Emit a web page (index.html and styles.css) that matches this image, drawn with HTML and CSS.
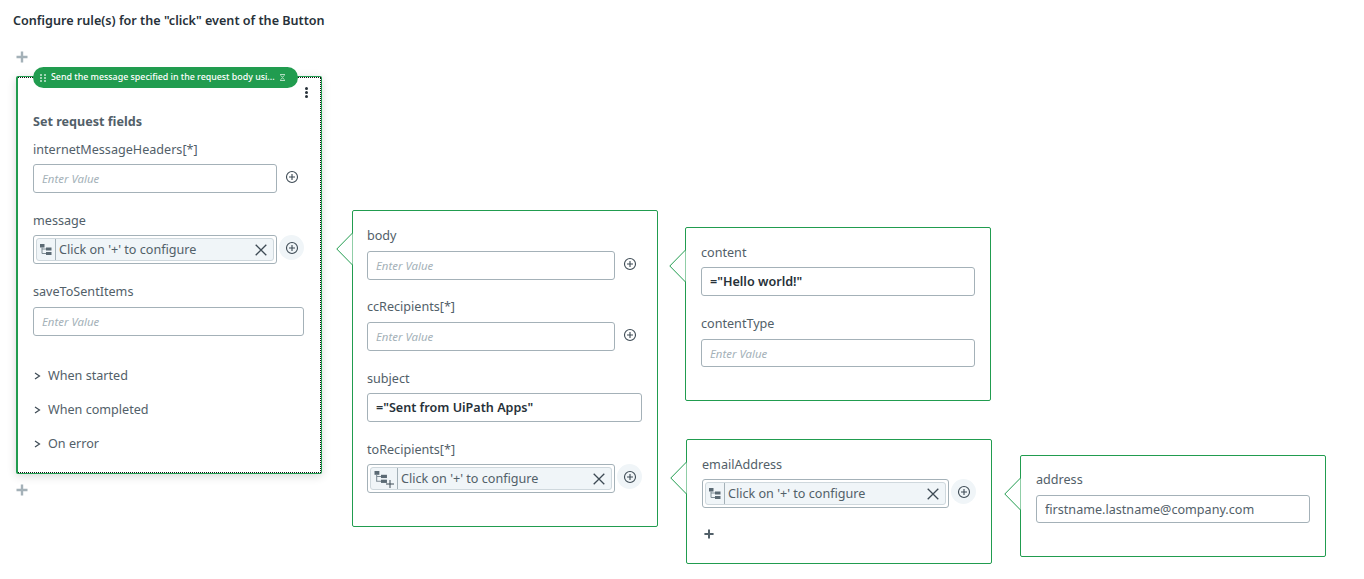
FILE: index.html
```html
<!DOCTYPE html>
<html lang="en">
<head>
<meta charset="utf-8">
<title>Configure rules</title>
<link rel="stylesheet" href="styles.css">
</head>
<body>
<svg class="defs" width="0" height="0" aria-hidden="true">
  <symbol id="tree" viewBox="0 0 12 12">
    <rect x="0" y="0" width="4.5" height="3.5" fill="#5b6a74"/>
    <rect x="6" y="3.5" width="5.5" height="3" fill="#5b6a74"/>
    <rect x="6" y="8" width="5.5" height="3" fill="#5b6a74"/>
    <path d="M2 3.5V9.5H6M2 5H6" fill="none" stroke="#7d8b94" stroke-width="1"/>
  </symbol>
  <symbol id="add" viewBox="0 0 14 14">
    <circle cx="7" cy="7" r="5.5" fill="none" stroke="#3d4a54" stroke-width="1.1"/>
    <path d="M7 4V10M4 7H10" fill="none" stroke="#3d4a54" stroke-width="1.1"/>
  </symbol>
  <symbol id="close" viewBox="0 0 12 12">
    <path d="M.7.7 11.3 11.3M11.3.7.7 11.3" fill="none" stroke="#3d4a54" stroke-width="1.3"/>
  </symbol>
  <symbol id="plus" viewBox="0 0 12 12">
    <path d="M6 .5V11.5M.5 6H11.5" fill="none" stroke="currentColor" stroke-width="2.4"/>
  </symbol>
  <symbol id="chev" viewBox="0 0 7 8">
    <path d="M1 1 5.5 4 1 7" fill="none" stroke="#3d4a54" stroke-width="1.2"/>
  </symbol>
  <symbol id="notch" viewBox="0 0 17 34">
    <path d="M16.5 0 .8 16 16.5 32" fill="#fff" stroke="#219c4f" stroke-width="1"/>
  </symbol>
</svg>

<main class="canvas">
  <section class="rules">
    <h1 class="title">Configure rule(s) for the "click" event of the Button</h1>
    <svg class="insert insert-top"><use href="#plus"/></svg>

    <article class="card">
      <div class="pill">
        <svg class="grip" viewBox="0 0 6 8"><path d="M0 0h2v2H0zM4 0h2v2H4zM0 3h2v2H0zM4 3h2v2H4zM0 6h2v2H0zM4 6h2v2H4z" fill="#9fd5b3"/></svg>
        <span class="pill-text">Send the message specified in the request body usi...</span>
        <svg class="collapse" viewBox="0 0 7 7"><path d="M1 .5H6M1.5 1.5 3.5 3 5.5 1.5M1.5 5.5 3.5 4 5.5 5.5M1 6.5H6" fill="none" stroke="#d8f0e0" stroke-width=".8"/></svg>
      </div>
      <div class="kebab"><i></i><i></i><i></i></div>
      <h2 class="section-title">Set request fields</h2>

      <div class="field">
        <label class="label">internetMessageHeaders[*]</label>
        <div class="row">
          <input class="input" placeholder="Enter Value">
          <span class="add"><svg><use href="#add"/></svg></span>
        </div>
      </div>
      <div class="field">
        <label class="label">message</label>
        <div class="row">
          <div class="input chipbox">
            <div class="chip">
              <span class="chip-icon"><svg><use href="#tree"/></svg></span>
              <span class="chip-text">Click on '+' to configure</span>
              <svg class="chip-close"><use href="#close"/></svg>
            </div>
          </div>
          <span class="add add-active"><svg><use href="#add"/></svg></span>
        </div>
      </div>
      <div class="field field-last">
        <label class="label">saveToSentItems</label>
        <div class="row">
          <input class="input" placeholder="Enter Value">
        </div>
      </div>

      <ul class="events">
        <li><svg class="chev"><use href="#chev"/></svg>When started</li>
        <li><svg class="chev"><use href="#chev"/></svg>When completed</li>
        <li><svg class="chev"><use href="#chev"/></svg>On error</li>
      </ul>
    </article>

    <svg class="insert insert-bottom"><use href="#plus"/></svg>
  </section>

  <section class="panel panel-message">
    <svg class="notch"><use href="#notch"/></svg>
    <div class="field">
      <label class="label">body</label>
      <div class="row">
        <input class="input" placeholder="Enter Value">
        <span class="add"><svg><use href="#add"/></svg></span>
      </div>
    </div>
    <div class="field">
      <label class="label">ccRecipients[*]</label>
      <div class="row">
        <input class="input" placeholder="Enter Value">
        <span class="add"><svg><use href="#add"/></svg></span>
      </div>
    </div>
    <div class="field">
      <label class="label">subject</label>
      <div class="row">
        <input class="input input-strong" value='="Sent from UiPath Apps"'>
      </div>
    </div>
    <div class="field">
      <label class="label">toRecipients[*]</label>
      <div class="row">
        <div class="input chipbox">
          <div class="chip">
            <span class="chip-icon chip-icon-wide">
              <svg class="tree-wide"><use href="#tree"/></svg>
              <svg class="tree-plus" viewBox="0 0 8 8"><path d="M4 0V8M0 4H8" fill="none" stroke="#3d4a54" stroke-width="1"/></svg>
            </span>
            <span class="chip-text">Click on '+' to configure</span>
            <svg class="chip-close"><use href="#close"/></svg>
          </div>
        </div>
        <span class="add add-active"><svg><use href="#add"/></svg></span>
      </div>
    </div>
  </section>

  <div class="stack">
    <section class="panel panel-body">
      <svg class="notch"><use href="#notch"/></svg>
      <div class="field">
        <label class="label">content</label>
        <div class="row">
          <input class="input input-strong" value='="Hello world!"'>
        </div>
      </div>
      <div class="field">
        <label class="label">contentType</label>
        <div class="row">
          <input class="input" placeholder="Enter Value">
        </div>
      </div>
    </section>

    <section class="panel panel-recipient">
      <svg class="notch"><use href="#notch"/></svg>
      <div class="field field-tight">
        <label class="label">emailAddress</label>
        <div class="row">
          <div class="input chipbox">
            <div class="chip">
              <span class="chip-icon"><svg><use href="#tree"/></svg></span>
              <span class="chip-text">Click on '+' to configure</span>
              <svg class="chip-close"><use href="#close"/></svg>
            </div>
          </div>
          <span class="add add-active"><svg><use href="#add"/></svg></span>
        </div>
      </div>
      <svg class="insert insert-dark"><use href="#plus"/></svg>
    </section>
  </div>

  <section class="panel panel-address">
    <svg class="notch"><use href="#notch"/></svg>
    <div class="field">
      <label class="label">address</label>
      <div class="row">
        <input class="input" value="firstname.lastname@company.com">
      </div>
    </div>
  </section>
</main>
</body>
</html>
```

FILE: styles.css
```css
* { box-sizing: border-box; }

html, body {
  margin: 0;
  background: #fff;
}

body {
  font-family: "Noto Sans", "Open Sans", sans-serif;
  font-size: 12.6px;
  line-height: 20px;
  color: #526069;
  overflow: hidden;
}

.defs { position: absolute; }

.canvas {
  display: flex;
  align-items: flex-start;
  height: 579px;
}

.rules {
  flex: 0 0 352px;
  padding: 11px 0 0 16px;
}

.title {
  margin: 0 0 0 -3px;
  font-size: 12.6px;
  font-weight: 600;
  line-height: 20px;
  color: #273139;
}

.insert {
  display: block;
  width: 12px;
  height: 12px;
  color: #a4b1b8;
}

.insert-top { margin: 20px 0 13px 0; }
.insert-bottom { margin-top: 10px; }
.insert-dark { margin: 21px 0 0 2px; width: 10px; height: 10px; color: #526069; }

.card {
  position: relative;
  width: 306px;
  height: 398px;
  padding: 35px 17px 0 15px;
  background: #fff;
  border: 1px solid #219c4f;
  border-left-width: 2px;
  border-radius: 2px;
  box-shadow: 0 2px 10px rgba(0, 0, 0, .16);
}

.card::after {
  content: "";
  position: absolute;
  inset: 0 0 0 0;
  border: 1px dotted #111;
  border-left: 0;
  pointer-events: none;
}

.pill {
  position: absolute;
  z-index: 1;
  top: -10px;
  left: 15px;
  display: flex;
  align-items: center;
  width: 265px;
  height: 21px;
  padding: 0 12px 0 7px;
  border-radius: 11px;
  background: #219c4f;
  color: #fff;
  font-size: 8.85px;
  font-weight: 500;
  line-height: 21px;
}

.grip { width: 6px; height: 8px; margin-right: 5px; flex: none; }
.pill-text { flex: 1; white-space: nowrap; }
.collapse { width: 7px; height: 7px; flex: none; }

.kebab {
  position: absolute;
  top: 10px;
  right: 13px;
  display: flex;
  flex-direction: column;
  gap: 1px;
}

.kebab i {
  display: block;
  width: 3px;
  height: 3px;
  border-radius: 50%;
  background: #273139;
}

.section-title {
  margin: 0 0 7px;
  font-size: 12.6px;
  font-weight: 700;
  line-height: 20px;
  color: #526069;
}

.field { margin-bottom: 17px; }
.field-last { margin-bottom: 30px; }
.field-tight { margin-bottom: 0; }

.label {
  display: block;
  padding-top: 1px;
  margin-bottom: 4px;
  line-height: 20px;
}

.field-last .label { margin-bottom: 5px; }

.panel-message .field:nth-child(-n+3) .label {
  padding-top: 0;
  margin-bottom: 5px;
}

.row {
  display: flex;
  align-items: flex-start;
}

.input {
  display: block;
  width: 100%;
  height: 29px;
  padding: 0 8px;
  border: 1px solid #a4b1b8;
  border-radius: 3px;
  background: #fff;
  font: inherit;
  color: #526069;
  outline: 0;
}

.input::placeholder {
  font-size: 11.4px;
  font-style: italic;
  color: #a4b1b8;
  opacity: 1;
}

.input-strong {
  font-weight: 600;
  color: #273139;
}

.chipbox { padding: 2px; }

.chip {
  display: flex;
  align-items: center;
  height: 23px;
  border: 1px solid #cfd8dd;
  border-radius: 3px;
  background: #f0f5f8;
}

.chip-icon {
  position: relative;
  display: flex;
  align-items: center;
  justify-content: center;
  flex: none;
  width: 19px;
  height: 100%;
  border-right: 1px solid #a4b1b8;
}

.chip-icon svg { width: 12px; height: 12px; }

.chip-icon-wide { width: 27px; }
.chip-icon .tree-wide { width: 14px; height: 13px; margin: -2px 6px 0 0; }
.chip-icon .tree-plus {
  position: absolute;
  right: 3px;
  bottom: 1px;
  width: 8px;
  height: 8px;
}

.chip-text {
  flex: 1;
  padding: 0 0 0 3px;
  white-space: nowrap;
}

.chip-close {
  flex: none;
  width: 12px;
  height: 12px;
  margin-right: 6px;
}

.add {
  display: flex;
  align-items: center;
  justify-content: center;
  flex: none;
  width: 25px;
  height: 25px;
  margin: 0 0 0 2px;
  border-radius: 50%;
}

.add svg { width: 14px; height: 14px; }
.add-active { background: #f0f5f8; }

.events {
  margin: 0;
  padding: 0;
  list-style: none;
}

.events li {
  display: flex;
  align-items: center;
  height: 20px;
  margin-bottom: 14px;
}

.chev {
  width: 7px;
  height: 8px;
  margin: 0 7px 0 1px;
}

.panel {
  position: relative;
  width: 306px;
  padding: 15px 15px 0 14px;
  border: 1px solid #219c4f;
  border-radius: 2px;
  background: #fff;
}

.notch {
  position: absolute;
  top: 22px;
  left: -17px;
  width: 17px;
  height: 34px;
  overflow: visible;
}

.panel-message .input,
.panel-body .input { flex: none; }

.panel-message {
  flex: none;
  height: 317px;
  margin-top: 210px;
}

.panel-message .input { width: 248px; }
.panel-message .input-strong { width: 275px; }

.stack {
  flex: none;
  margin: 227px 0 0 27px;
  display: flex;
  flex-direction: column;
  gap: 38px;
}

.panel-body {
  height: 174px;
  padding: 14px 15px 0 15px;
}

.panel-body .input { width: 274px; }
.panel-body .field + .field .label { margin-bottom: 5px; }
.panel-body .field + .field .input { height: 28px; }

.panel-recipient {
  height: 125px;
  margin-left: 1px;
  padding: 14px 15px 0 15px;
}

.panel-recipient .input { width: 247px; }

.panel-address {
  flex: none;
  height: 102px;
  margin: 455px 0 0 28px;
  padding: 13px 15px 0 15px;
}

.panel-address .label { margin-bottom: 5px; }
.panel-address .input { width: 275px; height: 28px; }
```
